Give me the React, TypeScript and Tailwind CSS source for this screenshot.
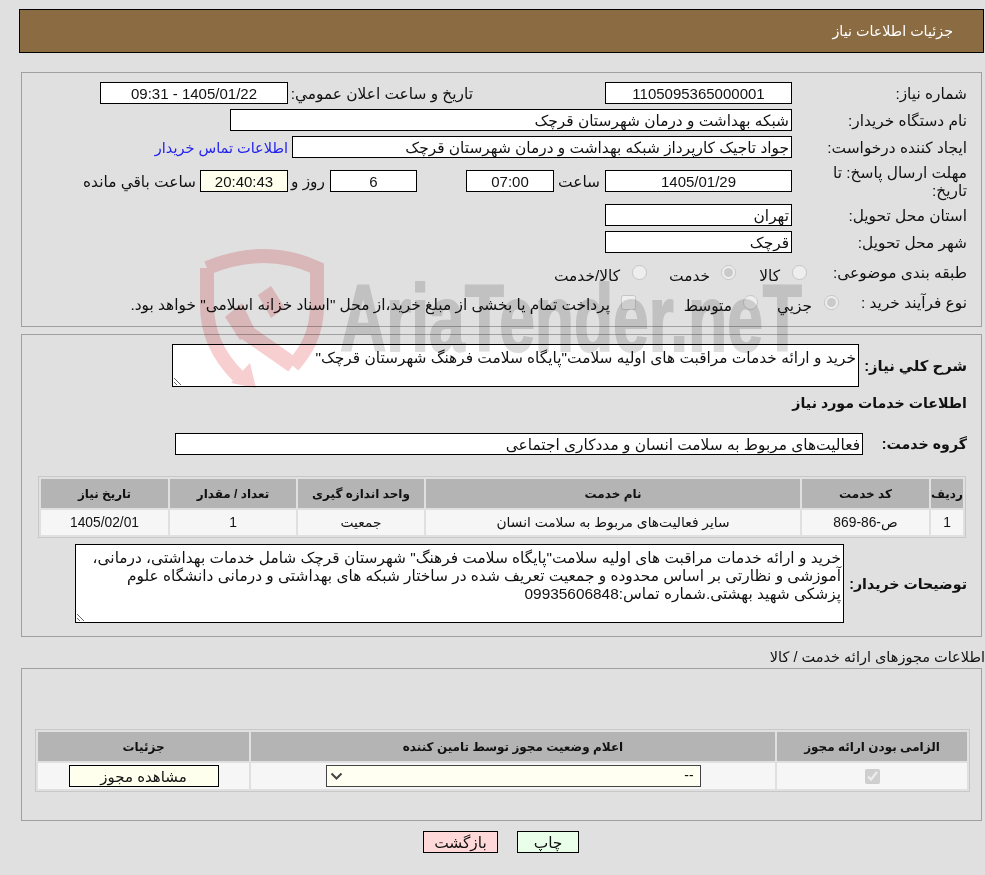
const boxCls = "h-[22px] shrink-0 border border-black bg-white flex items-center justify-center whitespace-nowrap pt-[2px]"
const numCls = "text-[15px]"
const labelCls = "w-[175px] shrink-0 pt-[2px] whitespace-nowrap"
const headCell = "bg-[#b4b4b4] flex items-center justify-center font-bold text-[12px] text-[#111]"
const bodyCell = "bg-[#f6f6f6] flex items-center justify-center text-[13.8px]"

function Watermark() {
  return (
    <svg className="absolute left-0 top-0 pointer-events-none mix-blend-multiply z-10" width="985" height="400" viewBox="0 0 985 400">
      <path d="M207 268 Q265 244 317 268 V305 C317 335 305 352 293 366" fill="none" stroke="#f7cfd1" strokeWidth="14" />
      <path d="M293 365 L240 328" fill="none" stroke="#f7cfd1" strokeWidth="16" />
      <path d="M207 268 V305 C207 335 220 358 238 376" fill="none" stroke="#f7cfd1" strokeWidth="14" />
      <polygon points="231,383 250,363 256,388" fill="#f7cfd1" />
      <polygon points="225,317 242,303 255,330 240,340" fill="#f7cfd1" />
      <polygon points="258,295 271,286 285,308 271,318" fill="#f7cfd1" />
      <text x="340" y="351" fontFamily="Liberation Sans" fontWeight="700" fontSize="95" textLength="462" lengthAdjust="spacingAndGlyphs" fill="#dcdcdc" stroke="#dcdcdc" strokeWidth="2" direction="ltr">AriaTender.neT</text>
    </svg>
  )
}

function Radio({ checked }: { checked?: boolean }) {
  return <input type="radio" disabled checked={!!checked} readOnly className="m-0 w-[15px] h-[15px] shrink-0" />
}

export default function App() {
  return (
    <div dir="rtl" className="relative min-h-[875px] bg-[#e0e0e0] text-[15.4px] leading-[20px] text-[#111] pt-[9px]" style={{ fontFamily: '"Liberation Sans", "DejaVu Sans", sans-serif' }}>
      <Watermark />

      {/* header */}
      <div className="ml-[19px] mr-px h-[44px] border border-black bg-[#8b6b42] flex items-center pr-[30px] text-white text-[14.3px]">
        جزئیات اطلاعات نیاز
      </div>

      {/* main info */}
      <div className="ml-[21px] mr-[3px] mt-[19px] h-[255px] border border-[#a0a0a0] pt-[9px] pr-[14px]">
        <div className="flex items-center h-[22px]">
          <div className={labelCls}>شماره نیاز:</div>
          <div className={`${boxCls} ${numCls} w-[187px]`}>1105095365000001</div>
          <div className="w-[317px] pr-[132px] pt-[2px] shrink-0 whitespace-nowrap">تاریخ و ساعت اعلان عمومي:</div>
          <div className={`${boxCls} ${numCls} w-[188px]`}>1405/01/22 - 09:31</div>
        </div>
        <div className="flex items-center h-[22px] mt-[5px]">
          <div className={labelCls}>نام دستگاه خریدار:</div>
          <div className={`${boxCls} w-[562px] !justify-start pr-[2px]`}>شبکه بهداشت و درمان شهرستان قرچک</div>
        </div>
        <div className="flex items-center h-[22px] mt-[5px]">
          <div className={labelCls}>ایجاد کننده درخواست:</div>
          <div className={`${boxCls} w-[500px] !justify-start pr-[2px]`}>جواد تاجیک کارپرداز شبکه بهداشت و درمان شهرستان قرچک</div>
          <a className="mr-[4px] pt-[2px] text-[#2222ee] text-[14.5px] whitespace-nowrap">اطلاعات تماس خریدار</a>
        </div>
        <div className="flex items-center h-[22px] mt-[12px]">
          <div className="w-[175px] shrink-0 leading-[18px] pt-[2px]">مهلت ارسال پاسخ: تا<br />تاریخ:</div>
          <div className={`${boxCls} ${numCls} w-[187px]`}>1405/01/29</div>
          <div className="w-[51px] shrink-0 pr-[5px] pt-[2px]">ساعت</div>
          <div className={`${boxCls} ${numCls} w-[88px]`}>07:00</div>
          <div className="w-[49px] shrink-0"></div>
          <div className={`${boxCls} ${numCls} w-[87px]`}>6</div>
          <div className="w-[42px] shrink-0 pr-[5px] pt-[2px] whitespace-nowrap">روز و</div>
          <div className={`${boxCls} ${numCls} w-[88px] !bg-[#ffffee]`}>20:40:43</div>
          <div className="pr-[4px] pt-[2px] whitespace-nowrap">ساعت باقي مانده</div>
        </div>
        <div className="flex items-center h-[22px] mt-[12px]">
          <div className={labelCls}>استان محل تحویل:</div>
          <div className={`${boxCls} w-[187px] !justify-start pr-[2px]`}>تهران</div>
        </div>
        <div className="flex items-center h-[22px] mt-[5px]">
          <div className={labelCls}>شهر محل تحویل:</div>
          <div className={`${boxCls} w-[187px] !justify-start pr-[2px]`}>قرچک</div>
        </div>
        <div className="flex items-center h-[22px] mt-[8px]">
          <div className="w-[160px] shrink-0 pt-[2px] whitespace-nowrap">طبقه بندی موضوعی:</div>
          <div className="w-[71px] shrink-0 flex items-center gap-[12px]"><Radio /><span className="mt-[8px]">کالا</span></div>
          <div className="w-[89px] shrink-0 flex items-center gap-[11px]"><Radio checked /><span className="mt-[8px]">خدمت</span></div>
          <div className="flex items-center gap-[12px] whitespace-nowrap"><Radio /><span className="mt-[8px]">کالا/خدمت</span></div>
        </div>
        <div className="flex items-center h-[22px] mt-[8px]">
          <div className="w-[128px] shrink-0 pt-[2px] whitespace-nowrap">نوع فرآیند خرید :</div>
          <div className="w-[81px] shrink-0 flex items-center gap-[12px]"><Radio checked /><span className="mt-[8px]">جزيي</span></div>
          <div className="w-[122px] shrink-0 flex items-center gap-[11px]"><Radio /><span className="mt-[8px]">متوسط</span></div>
          <div className="flex items-center gap-[11px] whitespace-nowrap">
            <input type="checkbox" disabled readOnly className="m-0 w-[15px] h-[15px] shrink-0" />
            <span className="mt-[6px]">پرداخت تمام یا بخشی از مبلغ خرید،از محل "اسناد خزانه اسلامی" خواهد بود.</span>
          </div>
        </div>
      </div>

      {/* description + service table */}
      <div className="ml-[21px] mr-[3px] mt-[7px] h-[303px] border border-[#a0a0a0] pt-[9px] pr-[14px]">
        <div className="flex items-center h-[43px]">
          <div className="w-[108px] shrink-0 font-bold text-[14.8px] whitespace-nowrap">شرح كلي نياز:</div>
          <div className="w-[687px] h-[43px] border border-black bg-white pr-[2px] pt-[3px] resize overflow-hidden leading-[20px]">
            خرید و ارائه خدمات مراقبت های اولیه سلامت"پایگاه سلامت فرهنگ شهرستان قرچک"
          </div>
        </div>
        <div className="mt-[6px] h-[20px] flex items-center font-bold text-[14.2px]">اطلاعات خدمات مورد نیاز</div>
        <div className="flex items-center h-[22px] mt-[20px]">
          <div className="w-[104px] shrink-0 font-bold text-[14.2px] whitespace-nowrap">گروه خدمت:</div>
          <div className={`${boxCls} w-[688px] !justify-start pr-[2px]`}>فعالیت‌های مربوط به سلامت انسان و مددکاری اجتماعی</div>
        </div>
        <div className="mt-[21px] ml-[16px] mr-px grid grid-cols-[32px_127px_374px_126px_126px_127px] grid-rows-[29px_25px] gap-[2px] p-[2px] border border-[#c8c8c8] h-[62px]">
          <div className={headCell}>ردیف</div>
          <div className={headCell}>کد خدمت</div>
          <div className={headCell}>نام خدمت</div>
          <div className={headCell}>واحد اندازه گیری</div>
          <div className={headCell}>تعداد / مقدار</div>
          <div className={headCell}>تاریخ نیاز</div>
          <div className={bodyCell}>1</div>
          <div className={bodyCell}>ص-86-869</div>
          <div className={bodyCell}>سایر فعالیت‌های مربوط به سلامت انسان</div>
          <div className={bodyCell}>جمعیت</div>
          <div className={bodyCell}>1</div>
          <div className={bodyCell}>1405/02/01</div>
        </div>
        <div className="flex items-center h-[79px] mt-[6px]">
          <div className="w-[123px] shrink-0 font-bold text-[14.2px] whitespace-nowrap">توضیحات خریدار:</div>
          <div className="w-[769px] h-[79px] border border-black bg-white px-[2px] resize overflow-hidden leading-[18px] pt-[4px] whitespace-nowrap">
            خرید و ارائه خدمات مراقبت های اولیه سلامت"پایگاه سلامت فرهنگ" شهرستان قرچک شامل خدمات بهداشتی، درمانی،<br />
            آموزشی و نظارتی بر اساس محدوده و جمعیت تعریف شده در ساختار شبکه های بهداشتی و درمانی دانشگاه علوم<br />
            پزشکی شهید بهشتی.شماره تماس:09935606848
          </div>
        </div>
      </div>

      {/* permits */}
      <div className="mt-[8px] h-[23px] flex items-center text-[14.5px]">اطلاعات مجوزهای ارائه خدمت / کالا</div>
      <div className="ml-[21px] mr-[3px] h-[153px] border border-[#a0a0a0] pt-[60px] pr-[11px] pl-[13px]">
        <div className="grid grid-cols-[190px_524px_211px] grid-rows-[29px_26px] gap-[2px] p-[2px] border border-[#c8c8c8] h-[63px]">
          <div className={headCell}>الزامی بودن ارائه مجوز</div>
          <div className={headCell}>اعلام وضعیت مجوز توسط تامین کننده</div>
          <div className={headCell}>جزئیات</div>
          <div className={bodyCell}>
            <input type="checkbox" disabled checked readOnly className="m-0 w-[15px] h-[15px]" />
          </div>
          <div className={bodyCell}>
            <div className="w-[375px] h-[22px] border border-[#444] bg-[#fffff2] flex items-center justify-between pr-[6px] pl-[3px]">
              <span>--</span>
              <svg width="14" height="14" viewBox="0 0 14 14" fill="none" stroke="#444" strokeWidth="2"><path d="M1.5 4.5l5 5 5-5" /></svg>
            </div>
          </div>
          <div className={bodyCell}>
            <div className="w-[150px] h-[22px] border border-black bg-[#ffffee] flex items-center justify-center text-[15px] pt-px">مشاهده مجوز</div>
          </div>
        </div>
      </div>

      {/* actions */}
      <div className="mt-[10px] flex justify-center gap-[19px] pl-[17px]">
        <button className="w-[62px] h-[22px] border border-black bg-[#eaffea] pt-px">چاپ</button>
        <button className="w-[75px] h-[22px] border border-black bg-[#ffd9d9] pt-px">بازگشت</button>
      </div>
    </div>
  )
}
